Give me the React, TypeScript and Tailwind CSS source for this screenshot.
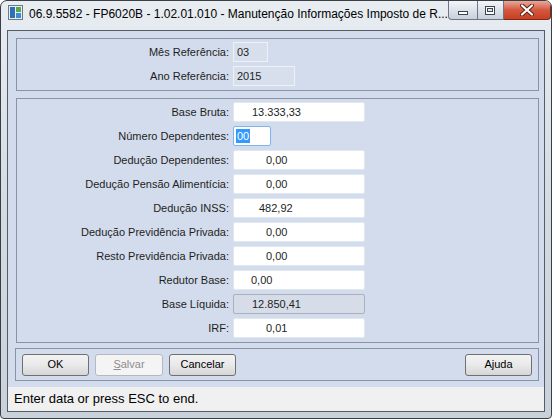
import React from 'react'

const ROWS = [
  { label: 'Base Bruta:', value: '13.333,33', pl: 'pl-[18px]', w: 'w-[132px]' },
  { label: 'Número Dependentes:', value: '00', pl: 'pl-[2px]', w: 'w-[38px]', focus: true },
  { label: 'Dedução Dependentes:', value: '0,00', pl: 'pl-[32px]', w: 'w-[132px]' },
  { label: 'Dedução Pensão Alimentícia:', value: '0,00', pl: 'pl-[32px]', w: 'w-[132px]' },
  { label: 'Dedução INSS:', value: '482,92', pl: 'pl-[25px]', w: 'w-[132px]' },
  { label: 'Dedução Previdência Privada:', value: '0,00', pl: 'pl-[32px]', w: 'w-[132px]' },
  { label: 'Resto Previdência Privada:', value: '0,00', pl: 'pl-[32px]', w: 'w-[132px]' },
  { label: 'Redutor Base:', value: '0,00', pl: 'pl-[17px]', w: 'w-[132px]' },
  { label: 'Base Líquida:', value: '12.850,41', pl: 'pl-[18px]', w: 'w-[132px]', readOnly: true },
  { label: 'IRF:', value: '0,01', pl: 'pl-[32px]', w: 'w-[132px]' },
]

function WindowIcon() {
  return (
    <svg width="15" height="15" viewBox="0 0 15 15">
      <rect x="0.5" y="0.5" width="14" height="14" fill="#e8eef4" stroke="#6c7a88" />
      <rect x="2" y="2" width="5" height="11" fill="#2f6fb8" />
      <rect x="8" y="2" width="5" height="5" fill="#5aa84a" />
      <rect x="8" y="8" width="5" height="5" fill="#3d8ed0" />
    </svg>
  )
}

function Field({ row }: { row: (typeof ROWS)[number] }) {
  const box = row.readOnly
    ? 'bg-[#d6dde9] border-[#a9b1bd]'
    : row.focus
      ? 'bg-white border-[#7eb4ea]'
      : 'bg-white border-[#e2e8f0]'
  return (
    <div className={`h-[20px] ${row.w} border ${box} rounded-[2px] flex items-center ${row.pl}`}>
      {row.focus ? (
        <span className="bg-[#3399ff] text-white leading-[14px] px-px">{row.value}</span>
      ) : (
        <span>{row.value}</span>
      )}
    </div>
  )
}

function Button({ label, disabled, className = '' }: { label: React.ReactNode; disabled?: boolean; className?: string }) {
  return (
    <div
      className={`h-[22px] w-[67px] rounded-[3px] border flex items-center justify-center ${
        disabled
          ? 'border-[#b5b9bd] bg-[#f4f4f4] text-[#8d8d8d]'
          : 'border-[#707070] bg-gradient-to-b from-[#f3f3f3] via-[#e9e9e9] to-[#d6d6d6] text-black'
      } ${className}`}
    >
      {label}
    </div>
  )
}

export default function App() {
  return (
    <div
      className="w-[552px] h-[419px] relative overflow-hidden rounded-t-[7px] rounded-b-[4px] border border-[#3a3f45] bg-gradient-to-b from-[#e8edf2] via-[#d4dbe3] to-[#c9d1da] text-[11px] text-[#1e1e1e]"
      style={{ fontFamily: '"Liberation Sans", Arial, sans-serif' }}
    >
      {/* Title bar */}
      <div className="h-[29px] flex items-start">
        <div className="pl-[7px] pt-[4px]">
          <WindowIcon />
        </div>
        <div className="pl-[6px] pt-[4px] text-[12px] text-black whitespace-nowrap">
          06.9.5582 - FP6020B - 1.02.01.010 - Manutenção Informações Imposto de R...
        </div>
        <div className="ml-auto mr-[6px] flex">
          <div className="w-[30px] h-[19px] rounded-bl-[4px] border border-t-0 border-[#6c7684] bg-gradient-to-b from-[#f3f6f9] to-[#c7d0da] flex items-end justify-center pb-[4px]">
            <div className="w-[10px] h-[4px] bg-white border border-[#3d4550]" />
          </div>
          <div className="w-[26px] h-[19px] border border-t-0 border-l-0 border-[#6c7684] bg-gradient-to-b from-[#f3f6f9] to-[#c7d0da] flex items-center justify-center">
            <div className="w-[10px] h-[9px] border border-[#3d4550] bg-white flex items-center justify-center">
              <div className="w-[6px] h-[4px] border border-[#3d4550] bg-[#dfe4ea]" />
            </div>
          </div>
          <div className="w-[47px] h-[19px] rounded-br-[4px] border border-t-0 border-l-0 border-[#7a2a1c] bg-gradient-to-b from-[#e8a898] via-[#d4573f] to-[#c8401f] flex items-center justify-center">
            <svg width="14" height="12" viewBox="0 0 14 12">
              <path d="M2 1.5 L12 10.5 M12 1.5 L2 10.5" stroke="#5a1f15" strokeWidth="4" strokeLinecap="round" />
              <path d="M2 1.5 L12 10.5 M12 1.5 L2 10.5" stroke="#ffffff" strokeWidth="2.2" strokeLinecap="round" />
            </svg>
          </div>
        </div>
      </div>

      {/* Client area */}
      <div className="ml-[6px] mr-[6px] h-[382px] border border-[#565c64] bg-[#d3dcec] flex flex-col">
        {/* Reference period */}
        <div className="mt-[7px] ml-[8px] mr-[5px] border border-[#8a93a3] pt-[3px] pb-[4px] flex flex-col gap-[4px]">
          <div className="flex items-center">
            <div className="w-[215px] text-right pr-[3px]">Mês Referência:</div>
            <div className="ml-[1px] h-[20px] w-[35px] border border-[#eef1f6] bg-[#d8dfec] flex items-center pl-[3px]">03</div>
          </div>
          <div className="flex items-center">
            <div className="w-[215px] text-right pr-[3px]">Ano Referência:</div>
            <div className="ml-[1px] h-[20px] w-[62px] border border-[#eef1f6] bg-[#d8dfec] flex items-center pl-[3px]">2015</div>
          </div>
        </div>

        {/* Values */}
        <div className="mt-[7px] ml-[8px] mr-[5px] border border-[#8a93a3] pt-[3px] pb-[4px] flex flex-col gap-[4px]">
          {ROWS.map((row) => (
            <div key={row.label} className="flex items-center">
              <div className="w-[215px] text-right pr-[3px] whitespace-nowrap">{row.label}</div>
              <div className="ml-[1px]">
                <Field row={row} />
              </div>
            </div>
          ))}
        </div>

        {/* Buttons */}
        <div className="mt-[5px] ml-[7px] mr-[5px] h-[33px] border border-[#8a93a3] flex items-center gap-[6px] px-[6px]">
          <Button label="OK" />
          <Button
            disabled
            className="w-[68px]"
            label={
              <span>
                <span className="underline">S</span>alvar
              </span>
            }
          />
          <Button label="Cancelar" className="w-[66px]" />
          <Button label="Ajuda" className="ml-auto" />
        </div>

        {/* Status bar */}
        <div className="mt-auto h-[24px] bg-[#f0f0f0] flex items-center pl-[6px] text-[13px] text-black">
          Enter data or press ESC to end.
        </div>
      </div>
    </div>
  )
}
